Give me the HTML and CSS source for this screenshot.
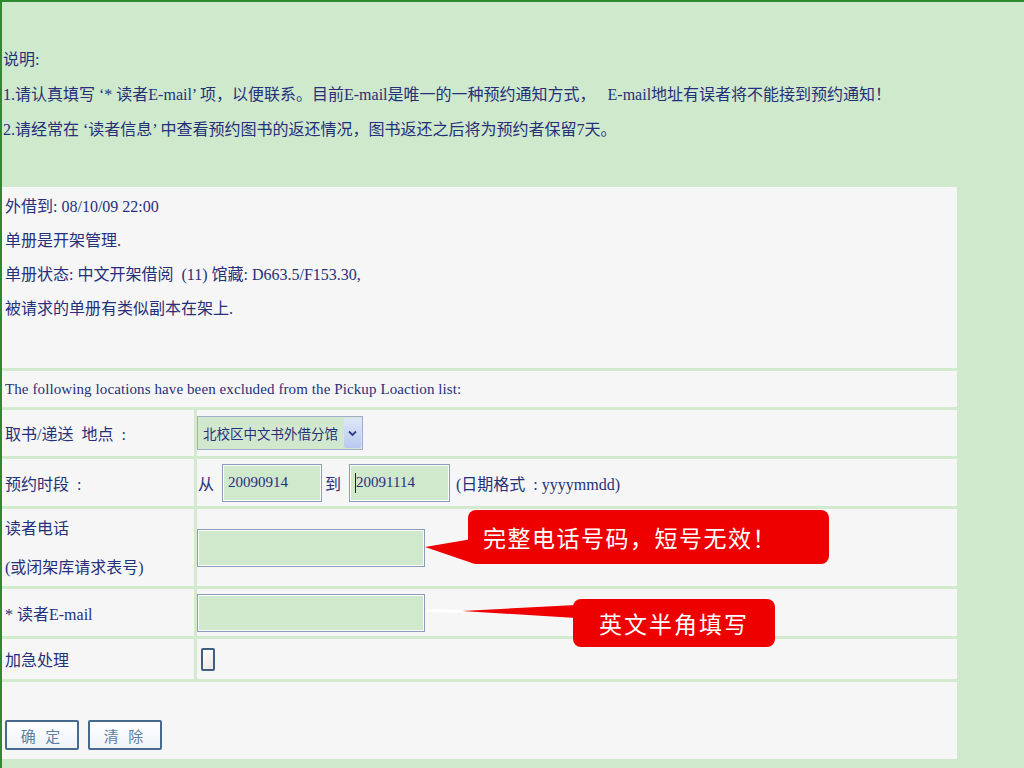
FILE: index.html
```html
<!DOCTYPE html>
<html lang="zh-CN">

<head>
    <meta charset="UTF-8">
    <title>预约请求</title>
    <link rel="stylesheet" href="styles.css">
</head>

<body>
    <div class="page">
        <div class="notes">
            <p>说明:</p>
            <p>1.请认真填写 ‘* 读者E-mail’ 项，以便联系。目前E-mail是唯一的一种预约通知方式，&nbsp;&nbsp; E-mail地址有误者将不能接到预约通知！</p>
            <p>2.请经常在 ‘读者信息’ 中查看预约图书的返还情况，图书返还之后将为预约者保留7天。</p>
        </div>

        <div class="form">
            <div class="cell wide info">
                <p>外借到: 08/10/09 22:00</p>
                <p>单册是开架管理.</p>
                <p>单册状态: 中文开架借阅 &nbsp;(11) 馆藏: D663.5/F153.30,</p>
                <p>被请求的单册有类似副本在架上.</p>
            </div>
            <div class="cell wide mid">The following locations have been excluded from the Pickup Loaction list:</div>

            <div class="cell label">取书/递送 &nbsp;地点 &nbsp;:</div>
            <div class="cell field">
                <div class="select">
                    <span class="selText">北校区中文书外借分馆</span>
                    <span class="selArrow">
                        <svg width="9" height="7" viewBox="0 0 9 7"><path d="M1 1.5 L4.5 5 L8 1.5" fill="none" stroke="#2b3f8a" stroke-width="1.8"/></svg>
                    </span>
                </div>
            </div>

            <div class="cell label">预约时段 &nbsp;:</div>
            <div class="cell field">
                <span class="word">从</span>
                <div class="input date1">20090914</div>
                <span class="word">到</span>
                <div class="input date2"><span class="caret"></span>20091114</div>
                <span class="hint">(日期格式 &nbsp;: yyyymmdd)</span>
            </div>

            <div class="cell label tall">读者电话<br>(或闭架库请求表号)</div>
            <div class="cell field">
                <div class="input long"></div>
            </div>

            <div class="cell label">* 读者E-mail</div>
            <div class="cell field">
                <div class="input long"></div>
            </div>

            <div class="cell label">加急处理</div>
            <div class="cell field">
                <div class="check"></div>
            </div>

            <div class="cell wide buttons">
                <button class="btn">确 定</button>
                <button class="btn">清 除</button>
            </div>
        </div>

        <!-- 红色提示框 -->
        <svg class="pointers" width="1024" height="768">
            <polygon points="425,547 472,539 472,563" fill="#ee0000"/>
            <polygon points="427,609 466,610 466,613 427,612" fill="#ffffff"/>
            <polygon points="462,611 576,605 576,618" fill="#ee0000"/>
        </svg>
        <div class="tip tip1">完整电话号码，短号无效！</div>
        <div class="tip tip2">英文半角填写</div>
    </div>
</body>

</html>
```

FILE: styles.css
```css
body {
    margin: 0;
    background-color: #cfe9cc;
}

.page {
    position: relative;
    width: 1024px;
    height: 768px;
    box-sizing: border-box;
    border-left: 2px solid #2e8a2e;
    border-top: 2px solid #2e8a2e;
    background-color: #cfe9cc;
    overflow: hidden;
    font-family: "Liberation Serif", "Noto Sans CJK SC", serif;
    font-size: 16px;
    color: #26307a;
}

p {
    margin: 0;
}

.notes {
    padding: 40px 0 0 1px;
    line-height: 35px;
}

.form {
    margin-top: 40px;
    width: 955px;
    display: grid;
    grid-template-columns: 192px 1fr;
    grid-template-rows: 181px 36px 46px 47px 77px 47px 40px 77px;
    gap: 3px;
    background-color: #d3eacf;
}

.cell {
    background-color: #f6f6f6;
}

.wide {
    grid-column: 1 / 3;
}

.info {
    padding: 3px 0 0 3px;
    line-height: 34px;
}

.mid {
    display: flex;
    align-items: center;
    padding-left: 3px;
    font-size: 15px;
    letter-spacing: 0.1px;
}

.label {
    display: flex;
    align-items: center;
    padding-left: 3px;
}

.label.tall {
    line-height: 39px;
}

.field {
    display: flex;
    align-items: center;
}

.word {
    margin: 0 8px 0 1px;
}

.select {
    display: flex;
    align-items: center;
    width: 166px;
    height: 34px;
    box-sizing: border-box;
    border: 1px solid #9fb0c8;
    background-color: #d2e8ce;
    padding: 0 1px 0 5px;
    font-size: 13.5px;
    white-space: nowrap;
}

.selText {
    flex: 1;
}

.selArrow {
    width: 17px;
    height: 30px;
    display: flex;
    align-items: center;
    justify-content: center;
    border-radius: 2px;
    background: linear-gradient(#dfe8fa, #b9c9ee);
}

.input {
    box-sizing: border-box;
    height: 38px;
    border: 1px solid #8a9dbc;
    box-shadow: inset 0 0 0 1px #ffffff;
    background-color: #d0e8cc;
    display: flex;
    align-items: center;
    font-size: 15px;
    padding-left: 5px;
}

.date1 {
    width: 100px;
    margin-right: 2px;
}

.date2 {
    width: 101px;
    margin-left: 0;
}

.caret {
    width: 1px;
    height: 20px;
    background-color: #222;
}

.hint {
    margin-left: 6px;
}

.long {
    width: 228px;
    height: 38px;
}

.check {
    width: 14px;
    height: 23px;
    margin-left: 4px;
    box-sizing: border-box;
    border: 2px solid #3f5f80;
    border-radius: 2px;
    background: linear-gradient(135deg, #ffffff, #ece8e2);
}

.buttons {
    display: flex;
    align-items: flex-end;
    gap: 9px;
    padding: 0 0 9px 3px;
}

.btn {
    width: 74px;
    height: 30px;
    border: 2px solid #46698c;
    border-radius: 2px;
    background: linear-gradient(#ffffff, #eef3f8);
    color: #5f7f9f;
    font-family: "Noto Sans CJK SC", sans-serif;
    font-size: 15px;
    letter-spacing: 3px;
    padding: 0;
}

.pointers {
    position: absolute;
    left: -2px;
    top: -2px;
}

.tip {
    position: absolute;
    background-color: #ee0000;
    border-radius: 8px;
    color: #ffffff;
    font-family: "Noto Sans CJK SC", sans-serif;
    font-size: 23px;
    display: flex;
    align-items: center;
}

.tip1 {
    left: 466px;
    top: 508px;
    width: 361px;
    height: 54px;
    box-sizing: border-box;
    padding-left: 15px;
    letter-spacing: 1.5px;
}

.tip2 {
    left: 571px;
    top: 597px;
    width: 202px;
    height: 48px;
    justify-content: center;
    letter-spacing: 2px;
}
```
